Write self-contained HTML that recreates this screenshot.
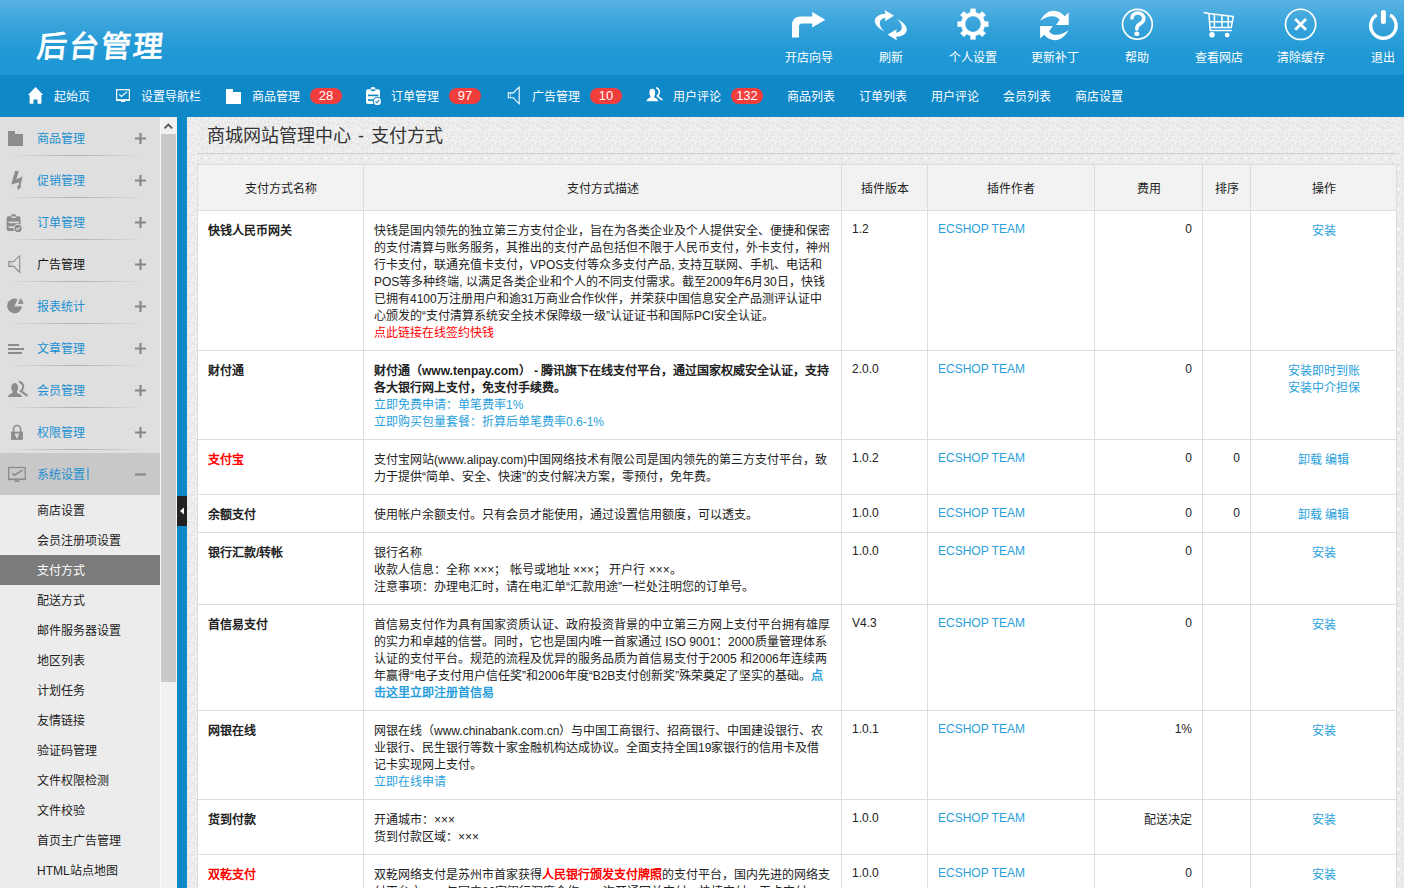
<!DOCTYPE html><html lang="zh-CN"><head><meta charset="utf-8"><title>ECSHOP</title><style>
*{margin:0;padding:0;box-sizing:border-box}
html,body{width:1404px;height:888px;overflow:hidden}
body{position:relative;font-family:"Liberation Sans",sans-serif;font-size:12px;color:#333;background:#efefef}
.a{position:absolute;white-space:nowrap}
#hd{position:absolute;left:0;top:0;width:1404px;height:75px;background:linear-gradient(to bottom,#5ab3e1 0px,#45aade 14px,#35a2da 28px,#279cd7 42px,#1f98d5 56px,#1c96d4 75px)}
#logo{position:absolute;left:37px;top:29px;font-size:30px;line-height:36px;color:#fff;font-weight:normal;-webkit-text-stroke:0.9px #fff;letter-spacing:2px;transform:skewX(-6deg);white-space:nowrap}
.tbl{position:absolute;top:50px;width:82px;line-height:17px;font-size:12px;color:#fff;text-align:center}
#nav{position:absolute;left:0;top:75px;width:1404px;height:42px;background:#0e88c7}
.nt{position:absolute;top:89px;line-height:17px;font-size:12px;color:#fff;white-space:nowrap}
.bd{position:absolute;top:88px;height:16px;width:32px;border-radius:8px;background:#f23d3d;color:#fff;text-align:center;line-height:16px;font-size:13px}
#side{position:absolute;left:0;top:117px;width:160px;height:378px;background:#dfdfdf}
.mt{position:absolute;left:37px;line-height:17px;color:#1b8fd1;font-size:12px;white-space:nowrap}
.sep{position:absolute;left:6px;width:140px;height:1px;background:linear-gradient(to right,rgba(190,190,190,0),#b0b0b0 50%,rgba(190,190,190,0))}
#act{position:absolute;left:0;top:453px;width:160px;height:42px;background:#c8c8c8}
#sub{position:absolute;left:0;top:495px;width:160px;height:393px;background:#ececec}
.st{position:absolute;left:37px;line-height:17px;color:#222;font-size:12px;white-space:nowrap}
#subact{position:absolute;left:0;top:555px;width:160px;height:30px;background:#7b7b7b}
#sbw{position:absolute;left:160px;top:117px;width:1px;height:771px;background:#fafafa}
#sbtrack{position:absolute;left:161px;top:117px;width:16px;height:771px;background:#f1f1f1}
#sbthumb{position:absolute;left:161px;top:134px;width:15px;height:548px;background:#c9c9c9}
#stripe{position:absolute;left:177px;top:117px;width:10px;height:771px;background:#0e88c7}
#tog{position:absolute;left:177px;top:496px;width:10px;height:30px;background:#222}
#main{position:absolute;left:187px;top:117px;width:1217px;height:771px;background:#ececec}
#title{position:absolute;left:207px;top:123px;font-size:18px;word-spacing:2px;line-height:26px;color:#333;white-space:nowrap}
#tline{position:absolute;left:197px;top:153px;width:1200px;height:1px;background:#d0d0d0}
#tbl{position:absolute;left:197px;top:164px;border-collapse:collapse;table-layout:fixed;background:#fff}
#tbl td,#tbl th{border:1px solid #dddddd;padding:12px 10px 8px 10px;line-height:17px;font-size:12px;vertical-align:top;white-space:nowrap;overflow:hidden;color:#222}
#tbl th{background:#f2f2f2;font-weight:normal;text-align:center;vertical-align:middle;height:46px;padding:4px 10px 0 10px}
#tbl td.nm{font-weight:bold}
.red{color:#f00 !important}
.blue{color:#2a9fdb !important}
#tbl td.r{text-align:right}
#tbl td.c{text-align:center}
.lt{position:relative;top:-2px}
#ov{position:absolute;left:0;top:0;width:1404px;height:888px;pointer-events:none}
</style></head><body>
<div id="hd"><div id="logo">后台管理</div></div>
<div class="tbl" style="left:768px">开店向导</div>
<div class="tbl" style="left:850px">刷新</div>
<div class="tbl" style="left:932px">个人设置</div>
<div class="tbl" style="left:1014px">更新补丁</div>
<div class="tbl" style="left:1096px">帮助</div>
<div class="tbl" style="left:1178px">查看网店</div>
<div class="tbl" style="left:1260px">清除缓存</div>
<div class="tbl" style="left:1342px">退出</div>
<div id="nav"></div>
<div class="nt" style="left:54px">起始页</div>
<div class="nt" style="left:141px">设置导航栏</div>
<div class="nt" style="left:252px">商品管理</div>
<div class="nt" style="left:391px">订单管理</div>
<div class="nt" style="left:532px">广告管理</div>
<div class="nt" style="left:673px">用户评论</div>
<div class="nt" style="left:787px">商品列表</div>
<div class="nt" style="left:859px">订单列表</div>
<div class="nt" style="left:931px">用户评论</div>
<div class="nt" style="left:1003px">会员列表</div>
<div class="nt" style="left:1075px">商店设置</div>
<div class="bd" style="left:310px">28</div>
<div class="bd" style="left:449px">97</div>
<div class="bd" style="left:590px">10</div>
<div class="bd" style="left:731px">132</div>
<div id="side"></div><div id="act"></div><div id="sub"></div><div id="subact"></div>
<div class="mt" style="top:131px">商品管理</div>
<div class="sep" style="top:155px"></div>
<div class="mt" style="top:173px">促销管理</div>
<div class="sep" style="top:197px"></div>
<div class="mt" style="top:215px">订单管理</div>
<div class="sep" style="top:239px"></div>
<div class="mt" style="top:257px;color:#111">广告管理</div>
<div class="sep" style="top:281px"></div>
<div class="mt" style="top:299px">报表统计</div>
<div class="sep" style="top:323px"></div>
<div class="mt" style="top:341px">文章管理</div>
<div class="sep" style="top:365px"></div>
<div class="mt" style="top:383px">会员管理</div>
<div class="sep" style="top:407px"></div>
<div class="mt" style="top:425px">权限管理</div>
<div class="sep" style="top:449px"></div>
<div class="mt" style="top:467px">系统设置</div>
<div class="st" style="top:503px">商店设置</div>
<div class="st" style="top:533px">会员注册项设置</div>
<div class="st" style="top:563px;color:#fff">支付方式</div>
<div class="st" style="top:593px">配送方式</div>
<div class="st" style="top:623px">邮件服务器设置</div>
<div class="st" style="top:653px">地区列表</div>
<div class="st" style="top:683px">计划任务</div>
<div class="st" style="top:713px">友情链接</div>
<div class="st" style="top:743px">验证码管理</div>
<div class="st" style="top:773px">文件权限检测</div>
<div class="st" style="top:803px">文件校验</div>
<div class="st" style="top:833px">首页主广告管理</div>
<div class="st" style="top:863px">HTML站点地图</div>
<div class="st" style="top:893px">站点地图</div>
<div id="sbw"></div><div id="sbtrack"></div><div id="sbthumb"></div><div id="stripe"></div><div id="tog"></div>
<svg style="position:absolute;left:187px;top:117px" width="1217" height="771"><defs><pattern id="nz" width="20" height="20" patternUnits="userSpaceOnUse"><rect width="20" height="20" fill="#ececec"/><rect x="0" y="0" width="1" height="1" fill="#f4f4f4"/><rect x="1" y="0" width="1" height="1" fill="#e4e4e4"/><rect x="3" y="0" width="1" height="1" fill="#e4e4e4"/><rect x="4" y="0" width="1" height="1" fill="#f4f4f4"/><rect x="5" y="0" width="1" height="1" fill="#f4f4f4"/><rect x="6" y="0" width="1" height="1" fill="#e4e4e4"/><rect x="7" y="0" width="1" height="1" fill="#f4f4f4"/><rect x="8" y="0" width="1" height="1" fill="#e4e4e4"/><rect x="9" y="0" width="1" height="1" fill="#f4f4f4"/><rect x="10" y="0" width="1" height="1" fill="#e4e4e4"/><rect x="11" y="0" width="1" height="1" fill="#e4e4e4"/><rect x="12" y="0" width="1" height="1" fill="#f4f4f4"/><rect x="14" y="0" width="1" height="1" fill="#e4e4e4"/><rect x="15" y="0" width="1" height="1" fill="#e4e4e4"/><rect x="18" y="0" width="1" height="1" fill="#f4f4f4"/><rect x="19" y="0" width="1" height="1" fill="#f4f4f4"/><rect x="1" y="1" width="1" height="1" fill="#e4e4e4"/><rect x="3" y="1" width="1" height="1" fill="#e4e4e4"/><rect x="4" y="1" width="1" height="1" fill="#e4e4e4"/><rect x="5" y="1" width="1" height="1" fill="#e4e4e4"/><rect x="6" y="1" width="1" height="1" fill="#f4f4f4"/><rect x="8" y="1" width="1" height="1" fill="#e4e4e4"/><rect x="9" y="1" width="1" height="1" fill="#f4f4f4"/><rect x="11" y="1" width="1" height="1" fill="#f4f4f4"/><rect x="12" y="1" width="1" height="1" fill="#f4f4f4"/><rect x="13" y="1" width="1" height="1" fill="#e4e4e4"/><rect x="14" y="1" width="1" height="1" fill="#e4e4e4"/><rect x="15" y="1" width="1" height="1" fill="#e4e4e4"/><rect x="17" y="1" width="1" height="1" fill="#f4f4f4"/><rect x="18" y="1" width="1" height="1" fill="#f4f4f4"/><rect x="19" y="1" width="1" height="1" fill="#f4f4f4"/><rect x="0" y="2" width="1" height="1" fill="#f4f4f4"/><rect x="1" y="2" width="1" height="1" fill="#e4e4e4"/><rect x="4" y="2" width="1" height="1" fill="#e4e4e4"/><rect x="5" y="2" width="1" height="1" fill="#f4f4f4"/><rect x="6" y="2" width="1" height="1" fill="#f4f4f4"/><rect x="9" y="2" width="1" height="1" fill="#e4e4e4"/><rect x="11" y="2" width="1" height="1" fill="#e4e4e4"/><rect x="12" y="2" width="1" height="1" fill="#f4f4f4"/><rect x="14" y="2" width="1" height="1" fill="#e4e4e4"/><rect x="15" y="2" width="1" height="1" fill="#f4f4f4"/><rect x="16" y="2" width="1" height="1" fill="#e4e4e4"/><rect x="19" y="2" width="1" height="1" fill="#f4f4f4"/><rect x="1" y="3" width="1" height="1" fill="#f4f4f4"/><rect x="3" y="3" width="1" height="1" fill="#f4f4f4"/><rect x="4" y="3" width="1" height="1" fill="#f4f4f4"/><rect x="5" y="3" width="1" height="1" fill="#f4f4f4"/><rect x="8" y="3" width="1" height="1" fill="#f4f4f4"/><rect x="10" y="3" width="1" height="1" fill="#e4e4e4"/><rect x="15" y="3" width="1" height="1" fill="#e4e4e4"/><rect x="16" y="3" width="1" height="1" fill="#f4f4f4"/><rect x="18" y="3" width="1" height="1" fill="#e4e4e4"/><rect x="19" y="3" width="1" height="1" fill="#f4f4f4"/><rect x="0" y="4" width="1" height="1" fill="#e4e4e4"/><rect x="1" y="4" width="1" height="1" fill="#e4e4e4"/><rect x="2" y="4" width="1" height="1" fill="#e4e4e4"/><rect x="4" y="4" width="1" height="1" fill="#e4e4e4"/><rect x="5" y="4" width="1" height="1" fill="#e4e4e4"/><rect x="6" y="4" width="1" height="1" fill="#f4f4f4"/><rect x="8" y="4" width="1" height="1" fill="#e4e4e4"/><rect x="9" y="4" width="1" height="1" fill="#f4f4f4"/><rect x="10" y="4" width="1" height="1" fill="#f4f4f4"/><rect x="14" y="4" width="1" height="1" fill="#e4e4e4"/><rect x="15" y="4" width="1" height="1" fill="#f4f4f4"/><rect x="16" y="4" width="1" height="1" fill="#f4f4f4"/><rect x="19" y="4" width="1" height="1" fill="#e4e4e4"/><rect x="0" y="5" width="1" height="1" fill="#e4e4e4"/><rect x="1" y="5" width="1" height="1" fill="#e4e4e4"/><rect x="2" y="5" width="1" height="1" fill="#e4e4e4"/><rect x="3" y="5" width="1" height="1" fill="#f4f4f4"/><rect x="4" y="5" width="1" height="1" fill="#f4f4f4"/><rect x="5" y="5" width="1" height="1" fill="#e4e4e4"/><rect x="6" y="5" width="1" height="1" fill="#e4e4e4"/><rect x="7" y="5" width="1" height="1" fill="#f4f4f4"/><rect x="8" y="5" width="1" height="1" fill="#f4f4f4"/><rect x="9" y="5" width="1" height="1" fill="#f4f4f4"/><rect x="12" y="5" width="1" height="1" fill="#f4f4f4"/><rect x="15" y="5" width="1" height="1" fill="#e4e4e4"/><rect x="0" y="6" width="1" height="1" fill="#f4f4f4"/><rect x="1" y="6" width="1" height="1" fill="#f4f4f4"/><rect x="2" y="6" width="1" height="1" fill="#e4e4e4"/><rect x="4" y="6" width="1" height="1" fill="#e4e4e4"/><rect x="5" y="6" width="1" height="1" fill="#e4e4e4"/><rect x="6" y="6" width="1" height="1" fill="#e4e4e4"/><rect x="7" y="6" width="1" height="1" fill="#e4e4e4"/><rect x="8" y="6" width="1" height="1" fill="#f4f4f4"/><rect x="9" y="6" width="1" height="1" fill="#e4e4e4"/><rect x="10" y="6" width="1" height="1" fill="#e4e4e4"/><rect x="11" y="6" width="1" height="1" fill="#e4e4e4"/><rect x="12" y="6" width="1" height="1" fill="#e4e4e4"/><rect x="13" y="6" width="1" height="1" fill="#f4f4f4"/><rect x="14" y="6" width="1" height="1" fill="#e4e4e4"/><rect x="17" y="6" width="1" height="1" fill="#e4e4e4"/><rect x="18" y="6" width="1" height="1" fill="#e4e4e4"/><rect x="19" y="6" width="1" height="1" fill="#f4f4f4"/><rect x="0" y="7" width="1" height="1" fill="#f4f4f4"/><rect x="1" y="7" width="1" height="1" fill="#e4e4e4"/><rect x="4" y="7" width="1" height="1" fill="#f4f4f4"/><rect x="5" y="7" width="1" height="1" fill="#f4f4f4"/><rect x="6" y="7" width="1" height="1" fill="#e4e4e4"/><rect x="7" y="7" width="1" height="1" fill="#e4e4e4"/><rect x="8" y="7" width="1" height="1" fill="#f4f4f4"/><rect x="9" y="7" width="1" height="1" fill="#e4e4e4"/><rect x="11" y="7" width="1" height="1" fill="#e4e4e4"/><rect x="12" y="7" width="1" height="1" fill="#e4e4e4"/><rect x="14" y="7" width="1" height="1" fill="#f4f4f4"/><rect x="15" y="7" width="1" height="1" fill="#e4e4e4"/><rect x="16" y="7" width="1" height="1" fill="#f4f4f4"/><rect x="17" y="7" width="1" height="1" fill="#e4e4e4"/><rect x="18" y="7" width="1" height="1" fill="#f4f4f4"/><rect x="2" y="8" width="1" height="1" fill="#e4e4e4"/><rect x="3" y="8" width="1" height="1" fill="#f4f4f4"/><rect x="4" y="8" width="1" height="1" fill="#e4e4e4"/><rect x="6" y="8" width="1" height="1" fill="#f4f4f4"/><rect x="8" y="8" width="1" height="1" fill="#f4f4f4"/><rect x="9" y="8" width="1" height="1" fill="#e4e4e4"/><rect x="16" y="8" width="1" height="1" fill="#e4e4e4"/><rect x="17" y="8" width="1" height="1" fill="#f4f4f4"/><rect x="18" y="8" width="1" height="1" fill="#f4f4f4"/><rect x="19" y="8" width="1" height="1" fill="#e4e4e4"/><rect x="0" y="9" width="1" height="1" fill="#e4e4e4"/><rect x="1" y="9" width="1" height="1" fill="#e4e4e4"/><rect x="2" y="9" width="1" height="1" fill="#e4e4e4"/><rect x="5" y="9" width="1" height="1" fill="#f4f4f4"/><rect x="9" y="9" width="1" height="1" fill="#f4f4f4"/><rect x="10" y="9" width="1" height="1" fill="#e4e4e4"/><rect x="11" y="9" width="1" height="1" fill="#e4e4e4"/><rect x="12" y="9" width="1" height="1" fill="#e4e4e4"/><rect x="13" y="9" width="1" height="1" fill="#e4e4e4"/><rect x="17" y="9" width="1" height="1" fill="#f4f4f4"/><rect x="0" y="10" width="1" height="1" fill="#e4e4e4"/><rect x="5" y="10" width="1" height="1" fill="#f4f4f4"/><rect x="6" y="10" width="1" height="1" fill="#e4e4e4"/><rect x="8" y="10" width="1" height="1" fill="#f4f4f4"/><rect x="11" y="10" width="1" height="1" fill="#f4f4f4"/><rect x="12" y="10" width="1" height="1" fill="#f4f4f4"/><rect x="15" y="10" width="1" height="1" fill="#e4e4e4"/><rect x="16" y="10" width="1" height="1" fill="#e4e4e4"/><rect x="17" y="10" width="1" height="1" fill="#e4e4e4"/><rect x="0" y="11" width="1" height="1" fill="#e4e4e4"/><rect x="4" y="11" width="1" height="1" fill="#f4f4f4"/><rect x="5" y="11" width="1" height="1" fill="#f4f4f4"/><rect x="6" y="11" width="1" height="1" fill="#e4e4e4"/><rect x="7" y="11" width="1" height="1" fill="#e4e4e4"/><rect x="10" y="11" width="1" height="1" fill="#f4f4f4"/><rect x="12" y="11" width="1" height="1" fill="#f4f4f4"/><rect x="15" y="11" width="1" height="1" fill="#e4e4e4"/><rect x="16" y="11" width="1" height="1" fill="#e4e4e4"/><rect x="17" y="11" width="1" height="1" fill="#e4e4e4"/><rect x="18" y="11" width="1" height="1" fill="#e4e4e4"/><rect x="19" y="11" width="1" height="1" fill="#f4f4f4"/><rect x="0" y="12" width="1" height="1" fill="#e4e4e4"/><rect x="1" y="12" width="1" height="1" fill="#f4f4f4"/><rect x="2" y="12" width="1" height="1" fill="#e4e4e4"/><rect x="4" y="12" width="1" height="1" fill="#f4f4f4"/><rect x="5" y="12" width="1" height="1" fill="#f4f4f4"/><rect x="6" y="12" width="1" height="1" fill="#f4f4f4"/><rect x="8" y="12" width="1" height="1" fill="#f4f4f4"/><rect x="10" y="12" width="1" height="1" fill="#f4f4f4"/><rect x="11" y="12" width="1" height="1" fill="#f4f4f4"/><rect x="12" y="12" width="1" height="1" fill="#f4f4f4"/><rect x="13" y="12" width="1" height="1" fill="#e4e4e4"/><rect x="14" y="12" width="1" height="1" fill="#f4f4f4"/><rect x="15" y="12" width="1" height="1" fill="#e4e4e4"/><rect x="16" y="12" width="1" height="1" fill="#e4e4e4"/><rect x="18" y="12" width="1" height="1" fill="#e4e4e4"/><rect x="19" y="12" width="1" height="1" fill="#f4f4f4"/><rect x="1" y="13" width="1" height="1" fill="#f4f4f4"/><rect x="2" y="13" width="1" height="1" fill="#f4f4f4"/><rect x="3" y="13" width="1" height="1" fill="#f4f4f4"/><rect x="4" y="13" width="1" height="1" fill="#f4f4f4"/><rect x="6" y="13" width="1" height="1" fill="#e4e4e4"/><rect x="7" y="13" width="1" height="1" fill="#f4f4f4"/><rect x="8" y="13" width="1" height="1" fill="#e4e4e4"/><rect x="9" y="13" width="1" height="1" fill="#e4e4e4"/><rect x="11" y="13" width="1" height="1" fill="#f4f4f4"/><rect x="12" y="13" width="1" height="1" fill="#f4f4f4"/><rect x="15" y="13" width="1" height="1" fill="#f4f4f4"/><rect x="17" y="13" width="1" height="1" fill="#f4f4f4"/><rect x="18" y="13" width="1" height="1" fill="#f4f4f4"/><rect x="0" y="14" width="1" height="1" fill="#f4f4f4"/><rect x="1" y="14" width="1" height="1" fill="#f4f4f4"/><rect x="2" y="14" width="1" height="1" fill="#f4f4f4"/><rect x="7" y="14" width="1" height="1" fill="#e4e4e4"/><rect x="8" y="14" width="1" height="1" fill="#f4f4f4"/><rect x="11" y="14" width="1" height="1" fill="#e4e4e4"/><rect x="12" y="14" width="1" height="1" fill="#e4e4e4"/><rect x="13" y="14" width="1" height="1" fill="#f4f4f4"/><rect x="14" y="14" width="1" height="1" fill="#e4e4e4"/><rect x="15" y="14" width="1" height="1" fill="#e4e4e4"/><rect x="16" y="14" width="1" height="1" fill="#e4e4e4"/><rect x="0" y="15" width="1" height="1" fill="#e4e4e4"/><rect x="3" y="15" width="1" height="1" fill="#e4e4e4"/><rect x="6" y="15" width="1" height="1" fill="#e4e4e4"/><rect x="8" y="15" width="1" height="1" fill="#f4f4f4"/><rect x="9" y="15" width="1" height="1" fill="#f4f4f4"/><rect x="12" y="15" width="1" height="1" fill="#e4e4e4"/><rect x="13" y="15" width="1" height="1" fill="#f4f4f4"/><rect x="14" y="15" width="1" height="1" fill="#f4f4f4"/><rect x="15" y="15" width="1" height="1" fill="#f4f4f4"/><rect x="16" y="15" width="1" height="1" fill="#e4e4e4"/><rect x="17" y="15" width="1" height="1" fill="#f4f4f4"/><rect x="19" y="15" width="1" height="1" fill="#e4e4e4"/><rect x="0" y="16" width="1" height="1" fill="#f4f4f4"/><rect x="1" y="16" width="1" height="1" fill="#f4f4f4"/><rect x="2" y="16" width="1" height="1" fill="#e4e4e4"/><rect x="3" y="16" width="1" height="1" fill="#f4f4f4"/><rect x="5" y="16" width="1" height="1" fill="#f4f4f4"/><rect x="6" y="16" width="1" height="1" fill="#e4e4e4"/><rect x="10" y="16" width="1" height="1" fill="#e4e4e4"/><rect x="11" y="16" width="1" height="1" fill="#e4e4e4"/><rect x="12" y="16" width="1" height="1" fill="#e4e4e4"/><rect x="14" y="16" width="1" height="1" fill="#e4e4e4"/><rect x="15" y="16" width="1" height="1" fill="#e4e4e4"/><rect x="16" y="16" width="1" height="1" fill="#f4f4f4"/><rect x="19" y="16" width="1" height="1" fill="#e4e4e4"/><rect x="0" y="17" width="1" height="1" fill="#e4e4e4"/><rect x="2" y="17" width="1" height="1" fill="#f4f4f4"/><rect x="4" y="17" width="1" height="1" fill="#e4e4e4"/><rect x="5" y="17" width="1" height="1" fill="#e4e4e4"/><rect x="7" y="17" width="1" height="1" fill="#f4f4f4"/><rect x="8" y="17" width="1" height="1" fill="#e4e4e4"/><rect x="12" y="17" width="1" height="1" fill="#e4e4e4"/><rect x="14" y="17" width="1" height="1" fill="#e4e4e4"/><rect x="16" y="17" width="1" height="1" fill="#f4f4f4"/><rect x="17" y="17" width="1" height="1" fill="#f4f4f4"/><rect x="18" y="17" width="1" height="1" fill="#f4f4f4"/><rect x="0" y="18" width="1" height="1" fill="#e4e4e4"/><rect x="1" y="18" width="1" height="1" fill="#e4e4e4"/><rect x="2" y="18" width="1" height="1" fill="#f4f4f4"/><rect x="3" y="18" width="1" height="1" fill="#e4e4e4"/><rect x="4" y="18" width="1" height="1" fill="#e4e4e4"/><rect x="5" y="18" width="1" height="1" fill="#e4e4e4"/><rect x="6" y="18" width="1" height="1" fill="#e4e4e4"/><rect x="7" y="18" width="1" height="1" fill="#e4e4e4"/><rect x="8" y="18" width="1" height="1" fill="#f4f4f4"/><rect x="9" y="18" width="1" height="1" fill="#f4f4f4"/><rect x="11" y="18" width="1" height="1" fill="#e4e4e4"/><rect x="12" y="18" width="1" height="1" fill="#f4f4f4"/><rect x="13" y="18" width="1" height="1" fill="#e4e4e4"/><rect x="14" y="18" width="1" height="1" fill="#f4f4f4"/><rect x="15" y="18" width="1" height="1" fill="#e4e4e4"/><rect x="16" y="18" width="1" height="1" fill="#e4e4e4"/><rect x="17" y="18" width="1" height="1" fill="#e4e4e4"/><rect x="19" y="18" width="1" height="1" fill="#f4f4f4"/><rect x="0" y="19" width="1" height="1" fill="#e4e4e4"/><rect x="1" y="19" width="1" height="1" fill="#f4f4f4"/><rect x="3" y="19" width="1" height="1" fill="#e4e4e4"/><rect x="5" y="19" width="1" height="1" fill="#f4f4f4"/><rect x="6" y="19" width="1" height="1" fill="#f4f4f4"/><rect x="8" y="19" width="1" height="1" fill="#f4f4f4"/><rect x="9" y="19" width="1" height="1" fill="#f4f4f4"/><rect x="12" y="19" width="1" height="1" fill="#f4f4f4"/><rect x="16" y="19" width="1" height="1" fill="#f4f4f4"/><rect x="17" y="19" width="1" height="1" fill="#f4f4f4"/><rect x="18" y="19" width="1" height="1" fill="#e4e4e4"/><rect x="19" y="19" width="1" height="1" fill="#e4e4e4"/></pattern></defs><rect width="1217" height="771" fill="url(#nz)"/></svg>
<div id="title">商城网站管理中心 - 支付方式</div><div id="tline"></div>
<table id="tbl"><colgroup><col style="width:166px"><col style="width:478px"><col style="width:86px"><col style="width:167px"><col style="width:108px"><col style="width:48px"><col style="width:146px"></colgroup>
<tr><th>支付方式名称</th><th>支付方式描述</th><th>插件版本</th><th>插件作者</th><th>费用</th><th>排序</th><th>操作</th></tr>
<tr><td class="nm">快钱人民币网关</td><td>快钱是国内领先的独立第三方支付企业，旨在为各类企业及个人提供安全、便捷和保密<br>的支付清算与账务服务，其推出的支付产品包括但不限于人民币支付，外卡支付，神州<br>行卡支付，联通充值卡支付，VPOS支付等众多支付产品, 支持互联网、手机、电话和<br>POS等多种终端, 以满足各类企业和个人的不同支付需求。截至2009年6月30日，快钱<br>已拥有4100万注册用户和逾31万商业合作伙伴，并荣获中国信息安全产品测评认证中<br>心颁发的“支付清算系统安全技术保障级一级”认证证书和国际PCI安全认证。<br><span class="red">点此链接在线签约快钱</span></td><td><div class="lt">1.2</div></td><td class="blue"><div class="lt">ECSHOP TEAM</div></td><td class="r"><div class="lt">0</div></td><td class="r"><div class="lt"></div></td><td class="c blue">安装</td></tr>
<tr><td class="nm">财付通</td><td><b>财付通（www.tenpay.com） - 腾讯旗下在线支付平台，通过国家权威安全认证，支持<br>各大银行网上支付，免支付手续费。</b><br><span class="blue">立即免费申请：单笔费率1%</span><br><span class="blue">立即购买包量套餐：折算后单笔费率0.6-1%</span></td><td><div class="lt">2.0.0</div></td><td class="blue"><div class="lt">ECSHOP TEAM</div></td><td class="r"><div class="lt">0</div></td><td class="r"><div class="lt"></div></td><td class="c blue">安装即时到账<br>安装中介担保</td></tr>
<tr><td class="nm red">支付宝</td><td>支付宝网站(www.alipay.com)中国网络技术有限公司是国内领先的第三方支付平台，致<br>力于提供“简单、安全、快速”的支付解决方案，零预付，免年费。</td><td><div class="lt">1.0.2</div></td><td class="blue"><div class="lt">ECSHOP TEAM</div></td><td class="r"><div class="lt">0</div></td><td class="r"><div class="lt">0</div></td><td class="c blue">卸载 编辑</td></tr>
<tr><td class="nm">余额支付</td><td>使用帐户余额支付。只有会员才能使用，通过设置信用额度，可以透支。</td><td><div class="lt">1.0.0</div></td><td class="blue"><div class="lt">ECSHOP TEAM</div></td><td class="r"><div class="lt">0</div></td><td class="r"><div class="lt">0</div></td><td class="c blue">卸载 编辑</td></tr>
<tr><td class="nm">银行汇款/转帐</td><td>银行名称<br>收款人信息：全称 ×××； 帐号或地址 ×××； 开户行 ×××。<br>注意事项：办理电汇时，请在电汇单“汇款用途”一栏处注明您的订单号。</td><td><div class="lt">1.0.0</div></td><td class="blue"><div class="lt">ECSHOP TEAM</div></td><td class="r"><div class="lt">0</div></td><td class="r"><div class="lt"></div></td><td class="c blue">安装</td></tr>
<tr><td class="nm">首信易支付</td><td>首信易支付作为具有国家资质认证、政府投资背景的中立第三方网上支付平台拥有雄厚<br>的实力和卓越的信誉。同时，它也是国内唯一首家通过 ISO 9001：2000质量管理体系<br>认证的支付平台。规范的流程及优异的服务品质为首信易支付于2005 和2006年连续两<br>年赢得“电子支付用户信任奖”和2006年度“B2B支付创新奖”殊荣奠定了坚实的基础。<b class="blue">点</b><br><b class="blue">击这里立即注册首信易</b></td><td><div class="lt">V4.3</div></td><td class="blue"><div class="lt">ECSHOP TEAM</div></td><td class="r"><div class="lt">0</div></td><td class="r"><div class="lt"></div></td><td class="c blue">安装</td></tr>
<tr><td class="nm">网银在线</td><td>网银在线（www.chinabank.com.cn）与中国工商银行、招商银行、中国建设银行、农<br>业银行、民生银行等数十家金融机构达成协议。全面支持全国19家银行的信用卡及借<br>记卡实现网上支付。<br><span class="blue">立即在线申请</span></td><td><div class="lt">1.0.1</div></td><td class="blue"><div class="lt">ECSHOP TEAM</div></td><td class="r"><div class="lt">1%</div></td><td class="r"><div class="lt"></div></td><td class="c blue">安装</td></tr>
<tr><td class="nm">货到付款</td><td>开通城市：×××<br>货到付款区域：×××</td><td><div class="lt">1.0.0</div></td><td class="blue"><div class="lt">ECSHOP TEAM</div></td><td class="r"><div>配送决定</div></td><td class="r"><div class="lt"></div></td><td class="c blue">安装</td></tr>
<tr><td class="nm red">双乾支付</td><td>双乾网络支付是苏州市首家获得<b class="red">人民银行颁发支付牌照</b>的支付平台，国内先进的网络支<br>付平台之一，与国内80家银行深度合作，一次开通网关支付，快捷支付，无卡支付。</td><td><div class="lt">1.0.0</div></td><td class="blue"><div class="lt">ECSHOP TEAM</div></td><td class="r"><div class="lt">0</div></td><td class="r"><div class="lt"></div></td><td class="c blue">安装</td></tr>
</table>
<svg id="ov" width="1404" height="888" viewBox="0 0 1404 888"><path d="M792,37.6 V25.5 Q792,16.5 801,16.5 H812.2 V12 L825.3,19.7 L812.2,27.4 V23.4 H802 Q799,23.4 799,26.4 V37.6 Z" fill="#fff"/><path d="M885,31.7 C877,28 872.5,22 876,17.5 C878,15 881.5,13.8 885.5,13.7 L884.6,9.9 L894,15.8 L884.8,21.2 L885.5,17.8 C882,18.2 879.5,20.5 879.8,23.5 C880,26.5 882,29.5 885,31.7 Z" fill="#fff"/><path d="M885,31.7 C877,28 872.5,22 876,17.5 C878,15 881.5,13.8 885.5,13.7 L884.6,9.9 L894,15.8 L884.8,21.2 L885.5,17.8 C882,18.2 879.5,20.5 879.8,23.5 C880,26.5 882,29.5 885,31.7 Z" fill="#fff" transform="rotate(180 890.8 25.2)"/><g fill="#fff"><rect x="970.3" y="8.6" width="5.4" height="7" transform="rotate(0 973 24.1)"/><rect x="970.3" y="8.6" width="5.4" height="7" transform="rotate(45 973 24.1)"/><rect x="970.3" y="8.6" width="5.4" height="7" transform="rotate(90 973 24.1)"/><rect x="970.3" y="8.6" width="5.4" height="7" transform="rotate(135 973 24.1)"/><rect x="970.3" y="8.6" width="5.4" height="7" transform="rotate(180 973 24.1)"/><rect x="970.3" y="8.6" width="5.4" height="7" transform="rotate(225 973 24.1)"/><rect x="970.3" y="8.6" width="5.4" height="7" transform="rotate(270 973 24.1)"/><rect x="970.3" y="8.6" width="5.4" height="7" transform="rotate(315 973 24.1)"/></g><circle cx="973" cy="24.1" r="9.9" fill="none" stroke="#fff" stroke-width="4.2"/><path d="M1040.3,20.7 C1044,14 1049,10.8 1053.4,10.8 C1058,10.8 1062,13 1064.6,16.2 L1068.7,12.6 V25 H1056.1 L1059.7,19.6 C1057.5,17 1055,16.2 1052.5,16.2 C1048,16.2 1044,18 1040.3,20.7 Z" fill="#fff"/><path d="M1040.3,20.7 C1044,14 1049,10.8 1053.4,10.8 C1058,10.8 1062,13 1064.6,16.2 L1068.7,12.6 V25 H1056.1 L1059.7,19.6 C1057.5,17 1055,16.2 1052.5,16.2 C1048,16.2 1044,18 1040.3,20.7 Z" fill="#fff" transform="rotate(180 1054.4 25.5)"/><circle cx="1137.4" cy="24.35" r="14.9" fill="none" stroke="#fff" stroke-width="1.7"/><path d="M1132,18 C1132,14.8 1134.5,13 1137.6,13 C1141.2,13 1143.8,15.3 1143.8,18.6 C1143.8,22 1141,23.3 1139,24.6 C1137.3,25.7 1136.8,26.8 1136.8,29" fill="none" stroke="#fff" stroke-width="3.6" stroke-linecap="round"/><ellipse cx="1136.8" cy="33.8" rx="2.6" ry="2.2" fill="#fff"/><g fill="none" stroke="#fff" stroke-width="1.5" stroke-linejoin="round"><path d="M1203.7,12.5 L1208.9,13.6 L1233.3,16.4 L1231.2,27.5 H1209.7"/><path d="M1208.9,13.6 L1210.2,30.5 H1231.8"/><path d="M1209.6,21.8 H1232.4"/><path d="M1214.4,14.3 V27.5 M1221.9,15.2 V27.5 M1228.2,15.9 V27.5"/></g><circle cx="1212" cy="34.8" r="2.8" fill="#fff"/><circle cx="1227.2" cy="35.1" r="2.4" fill="#fff"/><circle cx="1300.6" cy="24.35" r="15.1" fill="none" stroke="#fff" stroke-width="1.7"/><path d="M1296.2,20 L1305,28.8 M1305,20 L1296.2,28.8" stroke="#fff" stroke-width="2.8" stroke-linecap="square"/><path d="M1376.67,14.83 A12.7,12.7 0 1 0 1390.13,14.83" fill="none" stroke="#fff" stroke-width="3.4"/><line x1="1383.4" y1="12.4" x2="1383.4" y2="21.4" stroke="#fff" stroke-width="5" stroke-linecap="round"/><path d="M35.6,87 L43.2,95 H41.4 V103.8 H37.5 V99.4 H33.5 V103.8 H29.6 V95 H27.9 Z" fill="#fff"/><g fill="none" stroke="#fff" stroke-width="1.2"><rect x="116.6" y="89.7" width="12.8" height="10.4"/><path d="M119.2,94.4 L121.4,96.4 L127.2,91.6"/></g><rect x="116" y="99.4" width="14" height="1.5" fill="#fff"/><rect x="121" y="101" width="4" height="1" fill="#fff"/><path d="M226,89 H233 V92 H241 V104 H226 Z" fill="#fff"/><g transform="translate(0 0)"><path d="M368,89.3 H370.2 Q370.6,91.2 373,91.2 Q375.4,91.2 375.8,89.3 H378 Q380,89.3 380,91.3 V102.1 Q380,104.1 378,104.1 H368 Q366,104.1 366,102.1 V91.3 Q366,89.3 368,89.3 Z" fill="#fff"/><path d="M371,87.6 Q373,86.2 375,87.6 L375.6,89.6 H370.4 Z" fill="#fff"/><rect x="368" y="94.6" width="10.3" height="1.6" fill="#0e88c7"/><rect x="368" y="99.3" width="5.9" height="1.6" fill="#0e88c7"/><circle cx="377.4" cy="101.4" r="4.6" fill="#0e88c7"/><circle cx="377.4" cy="101.4" r="3.6" fill="#fff"/><path d="M375.5,101.3 L376.9,102.7 L379.3,100.2" fill="none" stroke="#0e88c7" stroke-width="1.1"/></g><g transform="translate(0 0)" fill="none" stroke="#fff" stroke-width="1.1"><path d="M508.3,92.9 H513.6 Q516,89.5 519.2,87.3 V103.7 Q516,101.2 513.6,97.8 H508.3 Z"/><path d="M510.6,93.4 V97.3" stroke-width="0.9" opacity="0.6"/></g><g transform="translate(0 0)" fill="#fff"><ellipse cx="652.3" cy="92.8" rx="2.9" ry="4"/><path d="M650.6,95.5 H654 L654.4,97.6 Q657.6,98.3 658.4,101.3 H646.4 Q647.2,98.3 650.2,97.6 Z"/><path d="M656.7,87.9 C659.5,89 660,92.5 658.6,94.6 C658,95.4 657.5,95.8 657.3,96 L661.8,99.6" fill="none" stroke="#fff" stroke-width="1.6" stroke-linecap="round"/></g><path d="M8,131 H15 V134 H23 V146 H8 Z" fill="#8c8c8c"/><path d="M15,171 H18.8 L16.3,179.4 L22.6,176.4 L20.4,186 L21.4,186.2 L18.2,190.3 L16.8,186.3 L18,186.4 L19.3,182.2 L11.3,184.6 Z" fill="#8c8c8c"/><g transform="translate(-359.4 127)"><path d="M368,89.3 H370.2 Q370.6,91.2 373,91.2 Q375.4,91.2 375.8,89.3 H378 Q380,89.3 380,91.3 V102.1 Q380,104.1 378,104.1 H368 Q366,104.1 366,102.1 V91.3 Q366,89.3 368,89.3 Z" fill="#8c8c8c"/><path d="M371,87.6 Q373,86.2 375,87.6 L375.6,89.6 H370.4 Z" fill="#8c8c8c"/><rect x="368" y="94.6" width="10.3" height="1.6" fill="#dfdfdf"/><rect x="368" y="99.3" width="5.9" height="1.6" fill="#dfdfdf"/><circle cx="377.4" cy="101.4" r="4.6" fill="#dfdfdf"/><circle cx="377.4" cy="101.4" r="3.6" fill="#8c8c8c"/><path d="M375.5,101.3 L376.9,102.7 L379.3,100.2" fill="none" stroke="#dfdfdf" stroke-width="1.1"/></g><g transform="translate(-499.5 168.6)" fill="none" stroke="#8c8c8c" stroke-width="1.1"><path d="M508.3,92.9 H513.6 Q516,89.5 519.2,87.3 V103.7 Q516,101.2 513.6,97.8 H508.3 Z"/><path d="M510.6,93.4 V97.3" stroke-width="0.9" opacity="0.6"/></g><path d="M14.4,306.4 L17.6,299.2 A7.4,7.4 0 1 0 21.9,306.2 Z" fill="#8c8c8c"/><path d="M20.4,298.2 Q22.8,300.6 23.6,303.7 L17.9,304.1 Z" fill="#8c8c8c"/><g fill="#8c8c8c"><rect x="8" y="344" width="11" height="2"/><rect x="8" y="348" width="16" height="2"/><rect x="8" y="352" width="14" height="2"/></g><g fill="#8c8c8c"><ellipse cx="14.7" cy="387.8" rx="3.5" ry="4.7"/><path d="M12.6,391 H16.8 L17.4,393.2 Q21.6,394 22,396.9 H7.8 Q8.6,394 12.2,393.2 Z"/><path d="M19.9,381.9 C23.2,383 24.2,387 22.4,389.4 C21.8,390.2 21.2,390.7 20.9,391 L26.9,395.3" fill="none" stroke="#8c8c8c" stroke-width="2.1" stroke-linecap="round"/></g><path d="M13.6,431.8 V429 A3.5,3.5 0 0 1 20.6,429 V431.8" fill="none" stroke="#8c8c8c" stroke-width="1.6"/><rect x="11.1" y="431.6" width="11.8" height="8.3" fill="#8c8c8c"/><path d="M15,433.5 H18.8 V435.6 L17.8,436.2 V437.9 H16 V436.2 L15,435.6 Z" fill="#dcdcdc"/><g fill="none" stroke="#8c8c8c" stroke-width="1.3"><rect x="8.7" y="467.5" width="16.5" height="11.8"/><path d="M12.4,473.2 L14.4,475.3 L22.6,470.1" stroke-width="1.6"/></g><rect x="8.1" y="478.6" width="17.7" height="1.5" fill="#8c8c8c"/><path d="M15,480.2 H19 L19.8,481.9 H14.2 Z" fill="#8c8c8c"/><path d="M135,138.5 H146 M140.5,133 V144" stroke="#888" stroke-width="2.2"/><path d="M135,180.5 H146 M140.5,175 V186" stroke="#888" stroke-width="2.2"/><path d="M135,222.5 H146 M140.5,217 V228" stroke="#888" stroke-width="2.2"/><path d="M135,264.5 H146 M140.5,259 V270" stroke="#888" stroke-width="2.2"/><path d="M135,306.5 H146 M140.5,301 V312" stroke="#888" stroke-width="2.2"/><path d="M135,348.5 H146 M140.5,343 V354" stroke="#888" stroke-width="2.2"/><path d="M135,390.5 H146 M140.5,385 V396" stroke="#888" stroke-width="2.2"/><path d="M135,432.5 H146 M140.5,427 V438" stroke="#888" stroke-width="2.2"/><path d="M135,474.5 H146" stroke="#888" stroke-width="2.2"/><rect x="87.5" y="467.5" width="1" height="13" fill="#1b8fd1"/><path d="M164.5,128.3 L168.3,124.5 L172.1,128.3" fill="none" stroke="#555" stroke-width="1.8"/><path d="M180,511 L184,507.5 V514.5 Z" fill="#fff"/></svg>
</body></html>
